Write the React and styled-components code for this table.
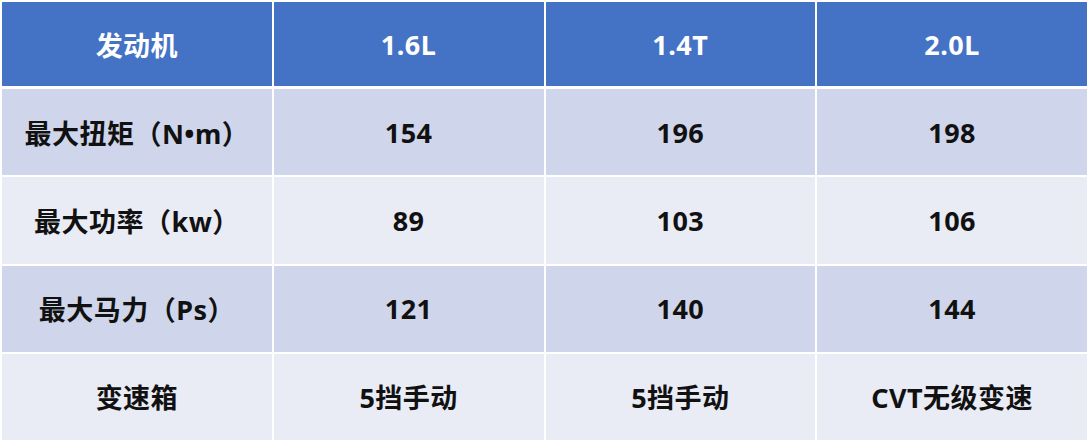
import React from "react";
import styled, { createGlobalStyle } from "styled-components";

const Global = createGlobalStyle`
  html, body { margin: 0; padding: 0; background: #ffffff; }
  body { font-family: "Noto Sans", "Noto Sans CJK SC", sans-serif; }
`;

const Page = styled.div`
  padding: 2px 4px 2px 2px;
  width: 1085px;
`;

const Table = styled.div`
  display: grid;
  grid-template-columns: repeat(4, 1fr);
  grid-template-rows: 85px repeat(4, 86.25px);
  column-gap: 2px;
  row-gap: 2px;
  background: #ffffff;
`;

const Cell = styled.div`
  display: flex;
  align-items: center;
  justify-content: center;
  font-family: "Noto Sans", "Noto Sans CJK SC", sans-serif;
  font-weight: 700;
  font-size: 27px;
  letter-spacing: 0.5px;
  color: ${(p) => (p.$head ? "#ffffff" : "#111111")};
  background: ${(p) => (p.$head ? "#4472C4" : p.$alt ? "#E9EBF5" : "#CFD5EA")};
  margin-bottom: ${(p) => (p.$head ? "1px" : "0")};
`;

const header = ["发动机", "1.6L", "1.4T", "2.0L"];
const rows = [
  ["最大扭矩（N•m）", "154", "196", "198"],
  ["最大功率（kw）", "89", "103", "106"],
  ["最大马力（Ps）", "121", "140", "144"],
  ["变速箱", "5挡手动", "5挡手动", "CVT无级变速"],
];

export default function App() {
  return (
    <Page>
      <Global />
      <Table>
        {header.map((h) => (
          <Cell key={h} $head>
            {h}
          </Cell>
        ))}
        {rows.map((r, i) =>
          r.map((c, j) => (
            <Cell key={`${i}-${j}`} $alt={i % 2 === 1}>
              {c}
            </Cell>
          ))
        )}
      </Table>
    </Page>
  );
}
